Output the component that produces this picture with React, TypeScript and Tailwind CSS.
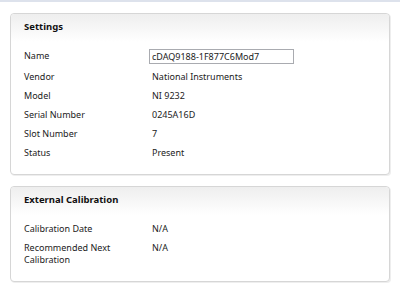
import React from "react";

const font = { fontFamily: '"Noto Sans", "Open Sans", sans-serif' };

function Row({ label, value, input }: { label: React.ReactNode; value: string; input?: boolean }) {
  return (
    <div className="flex items-start">
      <div className={"w-[128px] shrink-0 leading-[12px]" + (input ? " mt-[1px]" : "")}>{label}</div>
      {input ? (
        <div className="ml-[-3px] w-[145px] h-[15px] border border-[#a9abb0] pl-[2px] leading-[13px] bg-white">{value}</div>
      ) : (
        <div className="leading-[12px]">{value}</div>
      )}
    </div>
  );
}

function Panel({ title, children, className }: { title: string; children: React.ReactNode; className?: string }) {
  return (
    <div className={"rounded-[4px] border border-[#d6d6d6] bg-white shadow-[1px_1px_0_#eeeeee] " + (className ?? "")}>
      <div className="h-[28px] rounded-t-[4px] bg-gradient-to-b from-[#eeeeee] to-white pl-[13px] pt-[7px] font-bold text-[#111] text-[9.5px] leading-[12px]">
        {title}
      </div>
      {children}
    </div>
  );
}

export default function App() {
  return (
    <div className="w-[400px] h-[297px] bg-white text-[9px] text-[#222]" style={font}>
      <div className="h-[2px] bg-[#dde2ec]" />
      <div className="px-[10px] pt-[11px] flex flex-col gap-[11px]">
        <Panel title="Settings" className="h-[162px]">
          <div className="pl-[13px] pt-[7px] flex flex-col gap-[7px]">
            <Row label="Name" value="cDAQ9188-1F877C6Mod7" input />
            <Row label="Vendor" value="National Instruments" />
            <Row label="Model" value="NI 9232" />
            <Row label="Serial Number" value="0245A16D" />
            <Row label="Slot Number" value="7" />
            <Row label="Status" value="Present" />
          </div>
        </Panel>
        <Panel title="External Calibration" className="h-[96px]">
          <div className="pl-[13px] pt-[8px] flex flex-col gap-[7px]">
            <Row label="Calibration Date" value="N/A" />
            <Row label={<>Recommended Next<br />Calibration</>} value="N/A" />
          </div>
        </Panel>
      </div>
    </div>
  );
}
